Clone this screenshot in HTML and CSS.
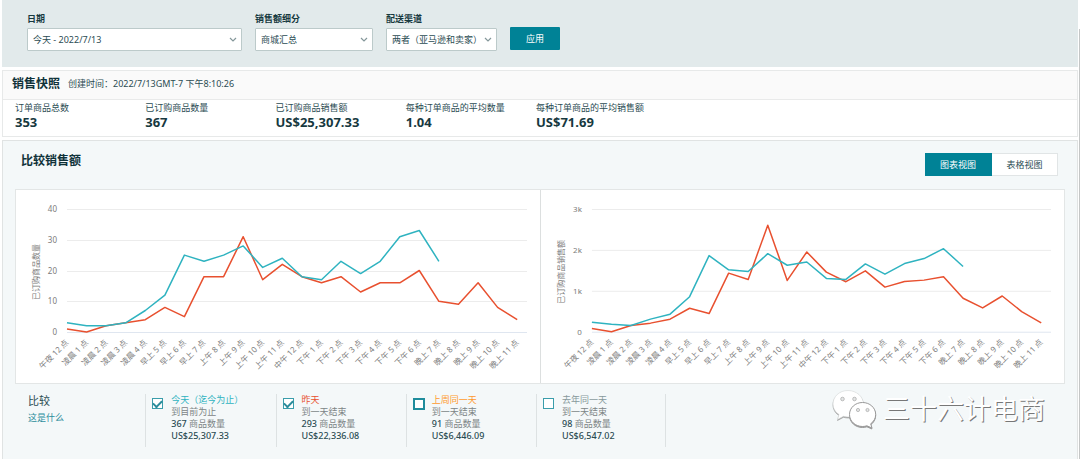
FILE: index.html
```html
<!DOCTYPE html>
<html lang="zh-CN">
<head>
<meta charset="UTF-8"/>
<meta name="viewport" content="width=device-width, initial-scale=1.0"/>
<title>销售控制面板</title>
<link rel="stylesheet" href="styles.css">
</head>
<body>
  <form class="filters">
    <div class="field field-date">
      <label for="date">日期</label>
      <div class="select-wrap">
        <select id="date"><option>今天 - 2022/7/13</option></select>
        <svg class="chevron" viewBox="0 0 8 6"><path d="M1 1l3 3 3-3"/></svg>
      </div>
    </div>
    <div class="field field-breakdown">
      <label for="breakdown">销售额细分</label>
      <div class="select-wrap">
        <select id="breakdown"><option>商城汇总</option></select>
        <svg class="chevron" viewBox="0 0 8 6"><path d="M1 1l3 3 3-3"/></svg>
      </div>
    </div>
    <div class="field field-channel">
      <label for="channel">配送渠道</label>
      <div class="select-wrap">
        <select id="channel"><option>两者（亚马逊和卖家）</option></select>
        <svg class="chevron" viewBox="0 0 8 6"><path d="M1 1l3 3 3-3"/></svg>
      </div>
    </div>
    <button type="button" class="apply">应用</button>
  </form>

  <section class="snapshot">
    <header class="snapshot-head">
      <h2>销售快照</h2>
      <span>创建时间：2022/7/13GMT-7 下午8:10:26</span>
    </header>
    <dl class="stats">
      <div><dt>订单商品总数</dt><dd>353</dd></div>
      <div><dt>已订购商品数量</dt><dd>367</dd></div>
      <div><dt>已订购商品销售额</dt><dd>US$25,307.33</dd></div>
      <div><dt>每种订单商品的平均数量</dt><dd>1.04</dd></div>
      <div><dt>每种订单商品的平均销售额</dt><dd>US$71.69</dd></div>
    </dl>
  </section>

  <section class="compare">
    <header class="compare-head">
      <h2>比较销售额</h2>
      <div class="toggle">
        <button type="button" class="active">图表视图</button>
        <button type="button">表格视图</button>
      </div>
    </header>

    <div class="charts">
      <svg id="chart-units" class="chart" viewBox="0 0 524 193"></svg>
      <svg id="chart-sales" class="chart" viewBox="0 0 524 193"></svg>
    </div>

    <div class="legend">
      <div class="legend-title">
        <h3>比较</h3>
        <a href="#">这是什么</a>
      </div>
      <label class="legend-item today">
        <input type="checkbox" checked>
        <span class="legend-text">
          <span class="name">今天（迄今为止）</span>
          <span>到目前为止</span>
          <span><b>367</b> 商品数量</span>
          <b>US$25,307.33</b>
        </span>
      </label>
      <label class="legend-item yesterday">
        <input type="checkbox" checked>
        <span class="legend-text">
          <span class="name">昨天</span>
          <span>到一天结束</span>
          <span><b>293</b> 商品数量</span>
          <b>US$22,336.08</b>
        </span>
      </label>
      <label class="legend-item last-week">
        <input type="checkbox">
        <span class="legend-text">
          <span class="name">上周同一天</span>
          <span>到一天结束</span>
          <span><b>91</b> 商品数量</span>
          <b>US$6,446.09</b>
        </span>
      </label>
      <label class="legend-item last-year">
        <input type="checkbox">
        <span class="legend-text">
          <span class="name">去年同一天</span>
          <span>到一天结束</span>
          <span><b>98</b> 商品数量</span>
          <b>US$6,547.02</b>
        </span>
      </label>
    </div>
  </section>

  <div class="watermark">
    <svg viewBox="0 0 46 40">
      <g class="bubble">
        <path d="M17 1.500C8.500 1.500 2 7.500 2 15c0 4.500 2.300 8 6 10.500L6.500 30.500l6-3.200c1.500.4 3 .7 4.500.7 8.500 0 15.500-5.800 15.500-13S25.500 1.500 17 1.500z"/>
        <circle cx="11.500" cy="10" r="1.800"/><circle cx="23.500" cy="10" r="1.800"/>
      </g>
      <g class="bubble">
        <path class="front" d="M31.500 13.500C24.300 13.500 18.500 18.800 18.500 25.500s5.800 12 13 12c1.500 0 3-.2 4.400-.7L41 39l-1.300-4.200c3-2.200 5-5.500 5-9.300 0-6.700-5.900-12-13.200-12z"/>
        <circle cx="27" cy="21" r="1.600"/><circle cx="36.500" cy="21" r="1.600"/>
      </g>
    </svg>
    <span>三十六计电商</span>
  </div>
  <div class="scrollbar"></div>

<script src="charts.js"></script>
</body>
</html>
```

FILE: styles.css
```css
* { box-sizing: border-box; }
body { margin: 0; padding: 0 2px; min-height: 100vh; display: flex; flex-direction: column; background: #fff; color: #2b4c53; font: 9px/12px "Noto Sans", "Noto Sans CJK SC", sans-serif; }
h2, h3, dl, dd { margin: 0; }
h2 { font-size: 12px; line-height: 16px; font-weight: 700; color: #0f3239; }
button, select { font: inherit; }
button { cursor: pointer; }

.filters { display: flex; align-items: flex-end; padding: 13px 25px 16px; background: #e2eaeb; }
.field { display: flex; flex-direction: column; gap: 3px; margin-right: 13px; }
.field label { font-weight: 700; color: #17393f; }
.field-date { width: 215px; }
.field-breakdown { width: 118px; }
.field-channel { width: 111px; }
.select-wrap { position: relative; }
.select-wrap select { display: block; width: 100%; height: 23px; padding: 0 5px; appearance: none; background: #fff; color: #2b4c53; border: 1px solid #bccaca; border-radius: 1px; }
.chevron { position: absolute; right: 5px; top: 9px; width: 8px; height: 6px; fill: none; stroke: #84979a; stroke-width: 1.2; pointer-events: none; }
.apply { width: 50px; height: 23px; margin-bottom: 1px; padding: 0; background: #008296; color: #fff; border: 0; border-radius: 1px; }

.snapshot { margin-top: 3px; border: 1px solid #e7e9e9; }
.snapshot-head { display: flex; align-items: center; gap: 8px; height: 29px; padding: 0 9px 2px; background: #fafafa; border-bottom: 1px solid #e9eaea; }
.stats { display: grid; grid-template-columns: repeat(8, 1fr); padding: 2px 20px 5px 12px; }
.stats div { white-space: nowrap; }
.stats dd { font-size: 13px; line-height: 17px; font-weight: 700; color: #17393f; }

.compare { flex: 1; margin-top: 3px; padding: 12px 12px 10px; background: #f4f8f9; border: 1px solid #e0e3e3; border-bottom: 0; }
.compare-head { display: flex; justify-content: space-between; padding: 0 7px 13px 6px; }
.toggle { display: flex; }
.toggle button { width: 66px; height: 23px; padding: 0; background: #fff; color: #2b4c53; border: 1px solid #e1e5e6; border-left: 0; }
.toggle .active { width: 67px; background: #008296; color: #fff; border-color: #008296; }

.charts { display: grid; grid-template-columns: 1fr 1fr; background: #fff; border: 1px solid #e3e6e6; }
.chart { display: block; width: 100%; font-size: 8px; }
.chart + .chart { border-left: 1px solid #dcdfdf; }
.chart .grid { stroke: #ececec; }
.chart .axis { stroke: #dfe6f0; }
.chart text { fill: #7c7c7c; }
.chart .title { text-anchor: middle; }
.chart .tick, .chart .hour { text-anchor: end; }
.chart polyline { fill: none; stroke-width: 1.5; stroke-linejoin: round; }
.chart .line-today { stroke: #2fb3c0; }
.chart .line-yesterday { stroke: #e8502f; }

.legend { display: grid; grid-template-columns: repeat(8, 1fr); margin-top: 10px; padding-right: 8px; }
.legend-title { padding: 0 13px; }
.legend-title h3 { font-size: 11px; line-height: 14px; font-weight: 400; color: #2b4c53; }
.legend a { display: inline-block; margin-top: 4px; color: #2b8c9b; text-decoration: none; }
.legend-item { display: flex; align-items: flex-start; gap: 8px; height: 53px; padding-left: 6px; border-left: 1px solid #dde2e3; white-space: nowrap; }
.legend-item:last-child { border-right: 1px solid #dde2e3; }
.legend-text { display: flex; flex-direction: column; color: #7d8586; }
.legend-text b { font-weight: 500; color: #2b4c53; }
.legend-item input { appearance: none; display: grid; place-items: center; flex: none; width: 11px; height: 11px; margin: 4px 0 0; background: #fff; border: 1px solid #3a9dab; }
.legend-item input:checked::before { content: ""; width: 7px; height: 4px; border: solid #2b8c9b; border-width: 0 0 2px 2px; transform: translateY(-1px) rotate(-45deg); }
.today .name { color: #2fb3c0; }
.yesterday .name { color: #e8502f; }
.last-week .name { color: #ff9a2e; }
.last-week input { width: 12px; height: 12px; margin-right: -1px; border: 2px solid #1f8c9c; }
.last-year .name { color: #87999c; }

.watermark { position: absolute; right: 35px; bottom: 30px; display: flex; align-items: center; gap: 6px; color: #fff; font-size: 27px; line-height: 40px; font-weight: 400; text-shadow: 1px 1px 0 #777; }
.watermark svg { width: 46px; height: 40px; filter: drop-shadow(0 1px 0 #999); }
.bubble { fill: #fff; stroke: #d4d6d6; stroke-width: .6; }
.bubble .front { stroke: #999; stroke-width: 1; }
.bubble circle { fill: #e4e6e6; stroke: #999; }
.scrollbar { position: fixed; top: 29px; right: 0; bottom: 0; width: 1px; background: #c4c6c6; }
```

FILE: charts.js
```js
const HOURS = ['午夜 12 点', '凌晨 1 点', '凌晨 2 点', '凌晨 3 点', '凌晨 4 点', '早上 5 点',
  '早上 6 点', '早上 7 点', '上午 8 点', '上午 9 点', '上午 10 点', '上午 11 点',
  '中午 12 点', '下午 1 点', '下午 2 点', '下午 3 点', '下午 4 点', '下午 5 点',
  '下午 6 点', '晚上 7 点', '晚上 8 点', '晚上 9 点', '晚上 10 点', '晚上 11 点'];

// plot area inside the 524x193 viewBox
const LEFT = 51, RIGHT = 511, TOP = 19, BOTTOM = 142;
const STEP = (RIGHT - LEFT) / 23.5;

function drawChart(id, title, max, ticks, today, yesterday) {
  const y = v => BOTTOM - v / max * (BOTTOM - TOP);
  const points = data => data.map((v, i) => `${(LEFT + i * STEP).toFixed(1)},${y(v).toFixed(1)}`).join(' ');
  let out = '';
  ticks.forEach((label, i) => {
    const ty = Math.round(y(max * i / (ticks.length - 1))) + 0.5;
    out += `<line class="${i ? 'grid' : 'axis'}" x1="${LEFT}" x2="${RIGHT}" y1="${ty}" y2="${ty}"/>`;
    out += `<text class="tick" x="${LEFT - 10}" y="${ty + 2.5}">${label}</text>`;
  });
  HOURS.forEach((label, i) => {
    const x = LEFT + i * STEP + 2;
    out += `<text class="hour" transform="translate(${x} 153) rotate(-45)">${label}</text>`;
  });
  out += `<text class="title" transform="translate(23 82) rotate(-90)">${title}</text>`;
  out += `<polyline class="line-yesterday" points="${points(yesterday)}"/>`;
  out += `<polyline class="line-today" points="${points(today)}"/>`;
  document.getElementById(id).innerHTML = out;
}

drawChart('chart-units', '已订购商品数量', 40, ['0', '10', '20', '30', '40'],
  [3, 2, 2, 3, 7, 12, 25, 23, 25, 28, 21, 24, 18, 17, 23, 19, 23, 31, 33, 23],
  [1, 0, 2, 3, 4, 8, 5, 18, 18, 31, 17, 22, 18, 16, 18, 13, 16, 16, 20, 10, 9, 16, 8, 4]);

drawChart('chart-sales', '已订购商品销售额', 3000, ['0', '1k', '2k', '3k'],
  [235, 186, 154, 307, 430, 857, 1860, 1512, 1471, 1908, 1625, 1706, 1302, 1277, 1657, 1407, 1665, 1787, 2029, 1593],
  [81, 0, 154, 210, 307, 574, 445, 1431, 1277, 2603, 1253, 1948, 1455, 1221, 1487, 1091, 1229, 1261, 1342, 816, 582, 873, 493, 218]);
```
